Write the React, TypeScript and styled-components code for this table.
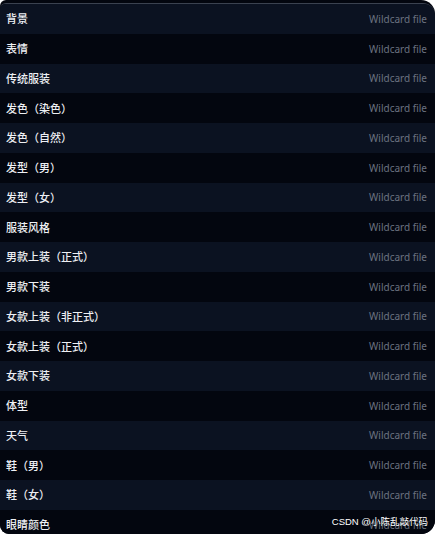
import React from 'react';
import styled, { createGlobalStyle } from 'styled-components';

const labels = [
    '背景',
    '表情',
    '传统服装',
    '发色（染色）',
    '发色（自然）',
    '发型（男）',
    '发型（女）',
    '服装风格',
    '男款上装（正式）',
    '男款下装',
    '女款上装（非正式）',
    '女款上装（正式）',
    '女款下装',
    '体型',
    '天气',
    '鞋（男）',
    '鞋（女）',
    '眼睛颜色',
];

const GlobalStyle = createGlobalStyle`
  html, body {
    margin: 0;
    padding: 0;
    background: #ffffff;
  }
  body {
    font-family: "Noto Sans", "Noto Sans CJK SC", sans-serif;
  }
`;

const App: React.FC = () => {
    return (
        <>
            <GlobalStyle />
            <Frame>
                <List>
                    {labels.map((label, i) => (
                        <Row key={label} $striped={i % 2 === 0}>
                            <Label>{label}</Label>
                            <Kind>Wildcard file</Kind>
                        </Row>
                    ))}
                </List>
                <Watermark>CSDN @小陈乱敲代码</Watermark>
            </Frame>
        </>
    );
};

const Frame = styled.div`
  position: relative;
  width: 435px;
  height: 534px;
  box-sizing: border-box;
  padding-top: 3px;
  background: #03060f;
  border-radius: 6px 14px 14px 9px;
  overflow: hidden;
`;

const List = styled.div`
  display: flex;
  flex-direction: column;
  border-top: 1px solid #3b4250;
  border-radius: 6px 12px 0 0;
  overflow: hidden;
`;

const Row = styled.div<{ $striped: boolean }>`
  display: flex;
  align-items: center;
  justify-content: space-between;
  height: 29.76px;
  flex-shrink: 0;
  padding: 0 8px 0 6px;
  background: ${({ $striped }) => ($striped ? '#0b1221' : '#03060f')};
`;

const Label = styled.span`
  font-size: 11px;
  font-weight: 500;
  line-height: 1;
  color: #eef0f4;
`;

const Kind = styled.span`
  font-size: 10px;
  line-height: 1;
  color: #6b7280;
`;

const Watermark = styled.span`
  position: absolute;
  right: 7px;
  bottom: 6px;
  font-family: "Liberation Sans", "Noto Sans CJK SC", sans-serif;
  font-size: 9.5px;
  color: #ffffff;
`;

export default App;
